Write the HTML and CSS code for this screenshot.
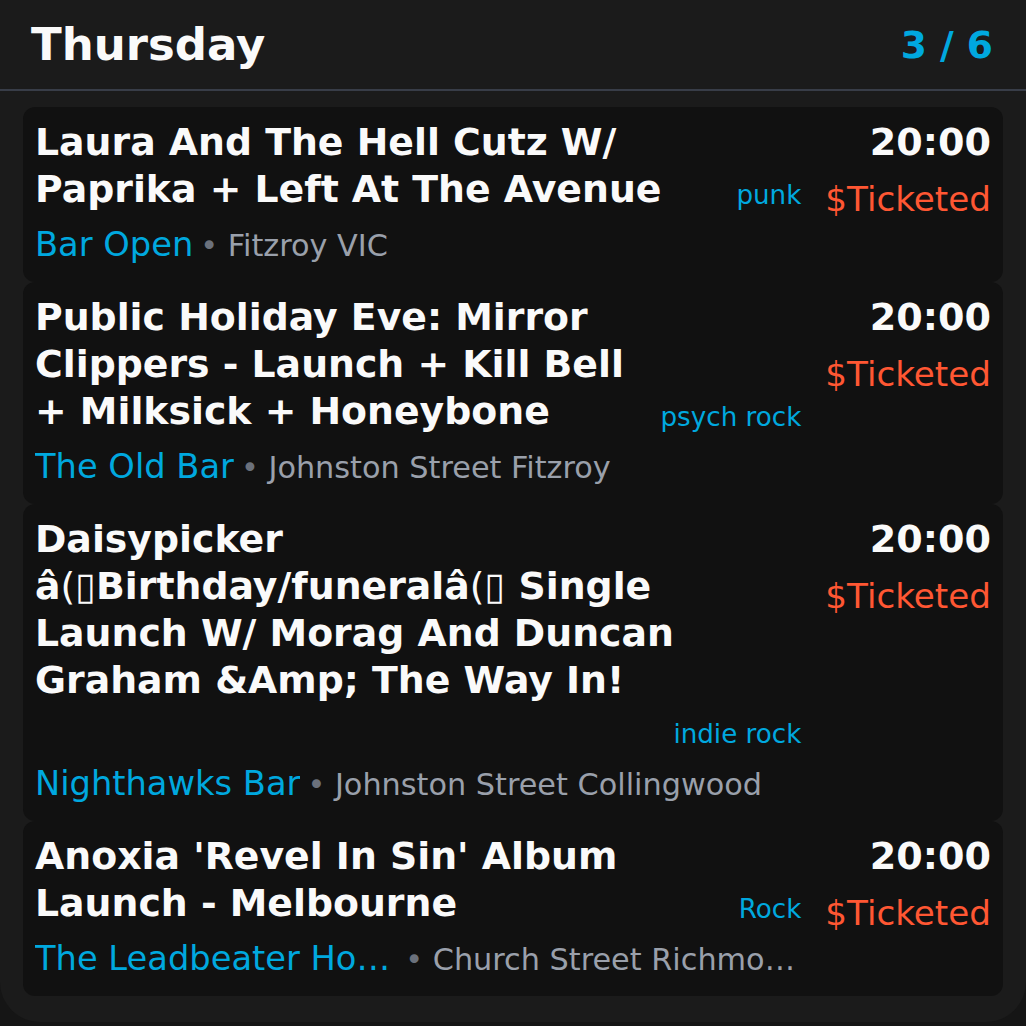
FILE: index.html
```html
<!DOCTYPE html>
<html lang="en">
<head>
<meta charset="utf-8">
<title>Thursday</title>
<link rel="stylesheet" href="styles.css">
</head>
<body>
<div class="panel">
  <header class="day-header">
    <h1 class="day">Thursday</h1>
    <span class="count">3 / 6</span>
  </header>
  <div class="list">
    <article class="card">
      <div class="main">
        <div class="top">
          <h2 class="title">Laura And The Hell Cutz W/ Paprika + Left At The Avenue</h2>
          <span class="genre">punk</span>
        </div>
        <div class="venue-row">
          <span class="venue">Bar Open</span>
          <span class="loc"><span class="dot">•</span> Fitzroy VIC</span>
        </div>
      </div>
      <div class="side">
        <span class="time">20:00</span>
        <span class="price">$Ticketed</span>
      </div>
    </article>
    <article class="card">
      <div class="main">
        <div class="top">
          <h2 class="title">Public Holiday Eve: Mirror Clippers - Launch + Kill Bell + Milksick + Honeybone</h2>
          <span class="genre">psych rock</span>
        </div>
        <div class="venue-row">
          <span class="venue">The Old Bar</span>
          <span class="loc"><span class="dot">•</span> Johnston Street Fitzroy</span>
        </div>
      </div>
      <div class="side">
        <span class="time">20:00</span>
        <span class="price">$Ticketed</span>
      </div>
    </article>
    <article class="card">
      <div class="main">
        <div class="top">
          <h2 class="title">Daisypicker â<span class="missing">(▯</span>Birthday/funeralâ<span class="missing">(▯</span>&nbsp;Single Launch W/ Morag And Duncan Graham &amp;Amp; The Way In!</h2>
          <span class="genre genre-below">indie rock</span>
        </div>
        <div class="venue-row">
          <span class="venue">Nighthawks Bar</span>
          <span class="loc"><span class="dot">•</span> Johnston Street Collingwood</span>
        </div>
      </div>
      <div class="side">
        <span class="time">20:00</span>
        <span class="price">$Ticketed</span>
      </div>
    </article>
    <article class="card">
      <div class="main">
        <div class="top">
          <h2 class="title">Anoxia 'Revel In Sin' Album Launch - Melbourne</h2>
          <span class="genre">Rock</span>
        </div>
        <div class="venue-row">
          <span class="venue">The Leadbeater Hotel</span>
          <span class="loc"><span class="dot">•</span> Church Street Richmond</span>
        </div>
      </div>
      <div class="side">
        <span class="time">20:00</span>
        <span class="price">$Ticketed</span>
      </div>
    </article>
  </div>
</div>
</body>
</html>
```
FILE: styles.css
```css
* { box-sizing: border-box; }
html, body { margin: 0; padding: 0; }
body {
  background: #151515;
  font-family: "DejaVu Sans", "Liberation Sans", sans-serif;
  color: #fafafa;
  width: 1026px;
  height: 1026px;
  overflow: hidden;
}
.panel {
  height: 1022px;
  background: #1b1b1b;
  border-radius: 0 0 40px 40px;
}
.day-header {
  height: 91px;
  display: flex;
  align-items: center;
  justify-content: space-between;
  padding: 0 33px 0 31px;
  border-bottom: 2px solid #383d48;
}
.day {
  margin: 0;
  font-size: 45px;
  font-weight: bold;
  color: #fafafa;
}
.count {
  font-size: 37.6px;
  font-weight: bold;
  color: #00a8df;
}
.list {
  padding: 16px 23px;
  display: flex;
  flex-direction: column;
}
.card {
  background: #111111;
  border-radius: 12px;
  padding: 12px;
  display: flex;
  gap: 24px;
}
.main {
  flex: 1;
  min-width: 0;
  display: flex;
  flex-direction: column;
  gap: 8px;
}
.top {
  display: flex;
  flex-wrap: wrap;
  align-items: flex-end;
  column-gap: 24px;
}
.title {
  flex: 1 1 0;
  min-width: 0;
  margin: 0;
  font-size: 37.8px;
  line-height: 47px;
  font-weight: bold;
  color: #fafafa;
}
.missing { font-weight: normal; }
.genre {
  flex: none;
  font-size: 26.2px;
  line-height: 36px;
  color: #00a8df;
}
.genre-below {
  flex-basis: 100%;
  text-align: right;
  margin-top: 12px;
}
.venue-row {
  display: flex;
  align-items: baseline;
  line-height: 48px;
  white-space: nowrap;
}
.venue {
  flex: 0 1 auto;
  min-width: 0;
  overflow: hidden;
  text-overflow: ellipsis;
  font-size: 33.7px;
  color: #00a8df;
}
.loc {
  flex: 0 1 auto;
  min-width: 0;
  overflow: hidden;
  text-overflow: ellipsis;
  margin-left: 7px;
  font-size: 30.3px;
  color: #9aa0ab;
}
.dot { color: #6b717c; }
.side {
  flex: none;
  display: flex;
  flex-direction: column;
  align-items: flex-end;
  gap: 10px;
}
.time {
  font-size: 38.1px;
  line-height: 47px;
  font-weight: bold;
  color: #fafafa;
}
.price {
  font-size: 34.2px;
  line-height: 46px;
  color: #ff5733;
}
```
